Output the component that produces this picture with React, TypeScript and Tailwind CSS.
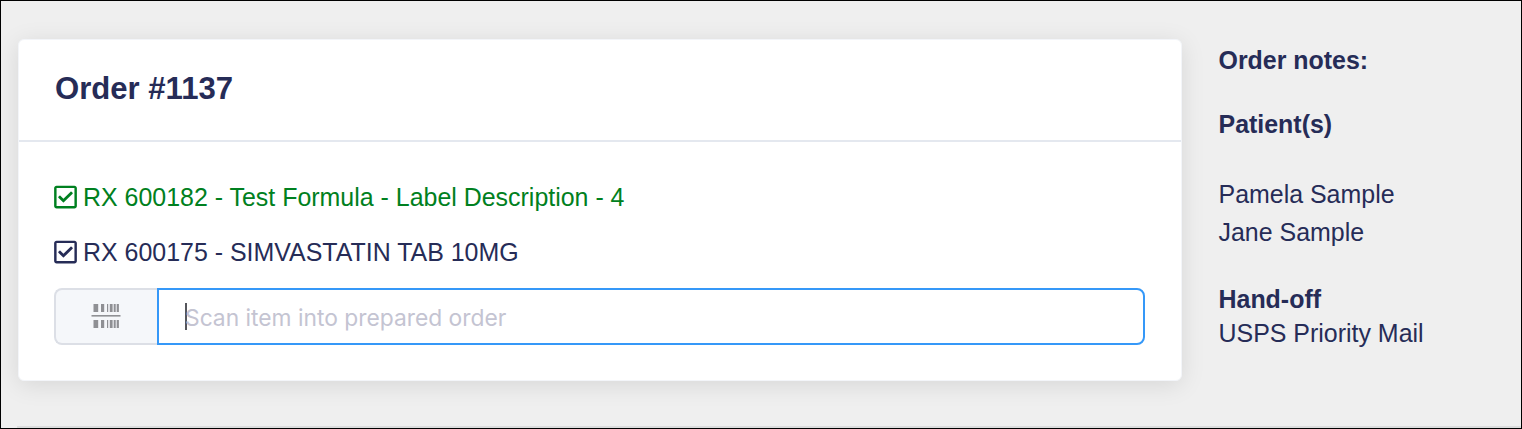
import { FaRegCheckSquare } from "react-icons/fa";

const bars = [
  [2.5, 4.7],
  [10, 3.2],
  [16, 1.2],
  [18.8, 2.8],
  [22.7, 2],
  [25.7, 2.2],
];

function BarcodeIcon() {
  return (
    <svg className="-mt-[1px] -ml-[2px]" width="30" height="26" viewBox="0 0 30 26" fill="#8f9094">
      {bars.map(([x, w]) => (
        <g key={x}>
          <rect x={x} y="1" width={w} height="8" />
          <rect x={x} y="17" width={w} height="8" />
        </g>
      ))}
      <rect x="0.5" y="12" width="29" height="1.6" />
    </svg>
  );
}

function OrderItem({ label, className }: { label: string; className: string }) {
  return (
    <div className={`flex h-[55px] items-center ${className}`}>
      <FaRegCheckSquare className="h-[26px] w-[23px] shrink-0" />
      <span className="ml-[6px] whitespace-nowrap text-[24.95px] leading-[30px]">{label}</span>
    </div>
  );
}

export default function App() {
  return (
    <div className="flex h-[429px] w-[1522px] flex-col overflow-hidden border border-black bg-[#efefef] font-['Liberation_Sans',Arial,sans-serif] text-[24.95px] text-[#262c57]">
      <div className="flex flex-1 items-start pt-[38px] pl-[17px]">
        <main className="h-[342px] w-[1164px] shrink-0 rounded-[6px] border border-[#f3f5f9] bg-white shadow-[0_4px_24px_rgba(0,0,0,0.1)]">
          <header className="flex h-[102px] items-center border-b-2 border-[#e4e8ef] px-[35px] pb-[3px]">
            <h1 className="ml-[1px] text-[31.1px] leading-[36px] font-bold">Order #1137</h1>
          </header>
          <section className="px-[35px] pt-[27px]">
            <OrderItem label="RX 600182 - Test Formula - Label Description - 4" className="text-[#008020]" />
            <OrderItem label="RX 600175 - SIMVASTATIN TAB 10MG" className="text-[#262c57]" />
            <div className="mt-[9px] flex h-[57px]">
              <div className="flex w-[103px] items-center justify-center rounded-l-[8px] border-2 border-r-0 border-[#dcdfe6] bg-[#f5f7fa]">
                <BarcodeIcon />
              </div>
              <div className="flex w-[988px] items-center rounded-r-[8px] border-2 border-[#3598f8] bg-white pl-[26px]">
                <span className="h-[27px] w-[2px] bg-[#55565c]" />
                <span className="-ml-[2px] pt-[3px] font-['Inter',sans-serif] text-[22.8px] leading-[30px] text-[#c4c4d2]">
                  Scan item into prepared order
                </span>
              </div>
            </div>
          </section>
        </main>
        <aside className="ml-[36.5px] flex flex-col pt-[6px] leading-[30px]">
          <h2 className="font-bold">Order notes:</h2>
          <h2 className="mt-[34px] font-bold">Patient(s)</h2>
          <p className="mt-[40px]">Pamela Sample</p>
          <p className="mt-[8px]">Jane Sample</p>
          <h2 className="mt-[37px] font-bold">Hand-off</h2>
          <p className="mt-[4px]">USPS Priority Mail</p>
        </aside>
      </div>
      <div className="ml-[16px] h-[2px] shrink-0 bg-[#dcdddd]" />
    </div>
  );
}
